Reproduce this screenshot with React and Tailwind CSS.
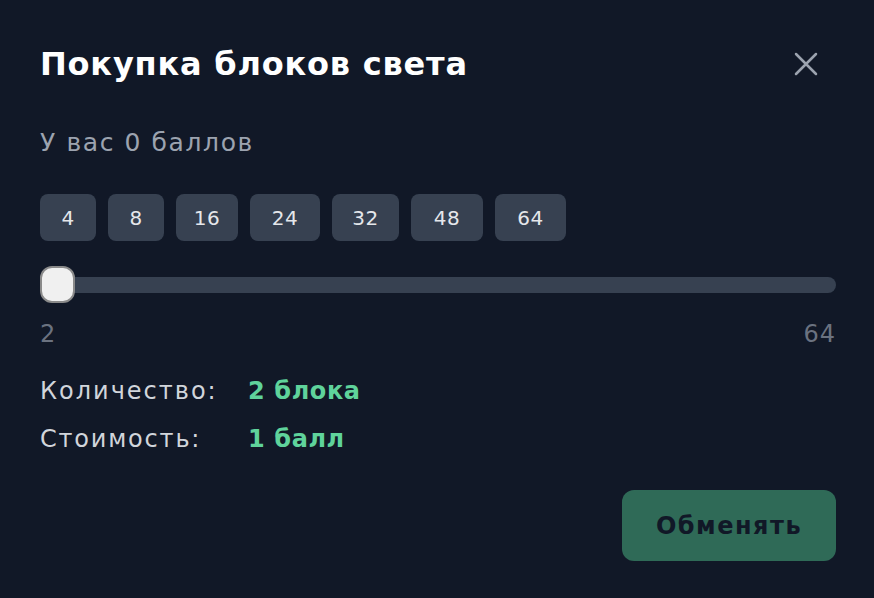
import { useState } from "react";

const presets = [
  { n: 4, w: "w-[56px]" },
  { n: 8, w: "w-[56px]" },
  { n: 16, w: "w-[62px]" },
  { n: 24, w: "w-[70px]" },
  { n: 32, w: "w-[67px]" },
  { n: 48, w: "w-[72px]" },
  { n: 64, w: "w-[71px]" },
];

function pointsWord(n) {
  return n === 1 ? "балл" : n < 5 ? "балла" : "баллов";
}

export default function App() {
  const [amount, setAmount] = useState(2);
  const min = 2;
  const max = 64;
  const pct = ((amount - min) / (max - min)) * 100;

  return (
    <div
      className="w-[874px] h-[598px] bg-[#111827] px-10 pt-[42px] text-white"
      style={{ fontFamily: "'DejaVu Sans', Verdana, sans-serif" }}
    >
      {/* Header */}
      <div className="flex items-center justify-between">
        <h2 className="text-[32px] font-bold tracking-[0.8px] text-white leading-[44px]">
          Покупка блоков света
        </h2>
        <button className="mr-4 text-[#9ca3af]">
          <svg width="24" height="24" viewBox="0 0 24 24" fill="none" stroke="currentColor" strokeWidth="2.5" strokeLinecap="round">
            <path d="M2 2l20 20M22 2L2 22" />
          </svg>
        </button>
      </div>

      <p className="mt-[41px] text-[25px] tracking-[1.6px] text-[#9ca3af] leading-8">У вас 0 баллов</p>

      {/* Presets */}
      <div className="mt-[35px] flex gap-3">
        {presets.map((p) => (
          <button
            key={p.n}
            onClick={() => setAmount(p.n)}
            className={`h-[47px] ${p.w} rounded-lg bg-[#374151] text-[20px] tracking-[0.5px] text-[#e5e7eb]`}
          >
            {p.n}
          </button>
        ))}
      </div>

      {/* Slider */}
      <div className="relative mt-[25px] h-[37px] w-[796px]">
        <div className="absolute left-0 right-0 top-[11px] h-4 rounded-full bg-[#374151]" />
        <div
          className="absolute top-0 h-[37px] w-[35px] rounded-[12px] border-2 border-[#8a8a8a] bg-[#f0f0f0]"
          style={{ left: `calc(${pct}% - ${(pct / 100) * 35}px)` }}
        />
      </div>
      <div className="mt-[17px] flex w-[796px] justify-between text-[24px] tracking-[1px] text-[#6b7280] leading-7">
        <span>{min}</span>
        <span>{max}</span>
      </div>

      {/* Summary */}
      <div className="mt-[26px] grid grid-cols-[208px_1fr] gap-y-[14px] text-[24px] leading-[34px]">
        <span className="tracking-[2px] text-[#d1d5db]">Количество:</span>
        <span className="font-bold tracking-[0.6px] text-[#5fd39b]">{amount} блока</span>
        <span className="tracking-[1.8px] text-[#d1d5db]">Стоимость:</span>
        <span className="font-bold tracking-[0.6px] text-[#5fd39b]">
          {amount / 2} {pointsWord(amount / 2)}
        </span>
      </div>

      <div className="mt-[34px] flex w-[796px] justify-end">
        <button className="h-[71px] w-[214px] rounded-xl bg-[#2f6a57] text-[24px] tracking-[1.5px] font-bold text-[#111827]">
          Обменять
        </button>
      </div>
    </div>
  );
}
